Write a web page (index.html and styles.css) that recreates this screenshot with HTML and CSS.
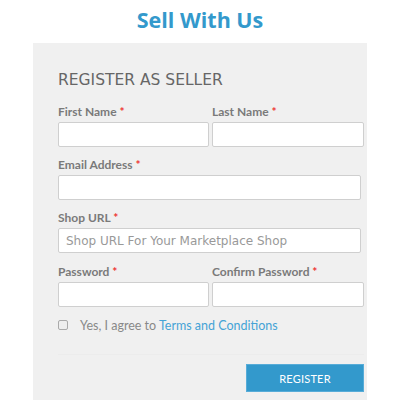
FILE: index.html
```html
<!DOCTYPE html>
<html>
<head>
<meta charset="utf-8">
<link rel="stylesheet" href="styles.css">
</head>
<body>
<h1 class="title">Sell With Us</h1>
<div class="panel">
  <h2 class="heading">REGISTER AS SELLER</h2>
  <div class="row two">
    <div class="field">
      <label class="lbl">First Name <span class="req">*</span></label>
      <input class="inp" type="text">
    </div>
    <div class="field">
      <label class="lbl">Last Name <span class="req">*</span></label>
      <input class="inp" type="text">
    </div>
  </div>
  <div class="row">
    <div class="field">
      <label class="lbl">Email Address <span class="req">*</span></label>
      <input class="inp full" type="text">
    </div>
  </div>
  <div class="row">
    <div class="field">
      <label class="lbl">Shop URL <span class="req">*</span></label>
      <input class="inp full" type="text" placeholder="Shop URL For Your Marketplace Shop">
    </div>
  </div>
  <div class="row two last">
    <div class="field">
      <label class="lbl">Password <span class="req">*</span></label>
      <input class="inp" type="password">
    </div>
    <div class="field">
      <label class="lbl">Confirm Password <span class="req">*</span></label>
      <input class="inp" type="password">
    </div>
  </div>
  <div class="agree">
    <span class="cb"></span>
    <span class="agree-text">Yes, I agree to <a class="link" href="#">Terms and Conditions</a></span>
  </div>
  <div class="actions">
    <button class="btn" type="button">REGISTER</button>
  </div>
</div>
</body>
</html>
```

FILE: styles.css
```css
html, body {
  margin: 0;
  padding: 0;
  background: #fff;
}
.title {
  margin: 0;
  padding-top: 6px;
  height: 36px;
  box-sizing: border-box;
  text-align: center;
  font-family: "Open Sans", sans-serif;
  font-weight: 700;
  font-size: 21.5px;
  line-height: 27px;
  color: #3399cc;
}
.panel {
  margin-top: 7px;
  margin-left: 33px;
  width: 334px;
  height: 357px;
  box-sizing: border-box;
  background: #f0f0f0;
  padding: 27px 3px 0 25px;
}
.heading {
  margin: 0;
  font-family: "DejaVu Sans", sans-serif;
  font-weight: 400;
  font-size: 15.5px;
  line-height: 20px;
  color: #666;
}
.row {
  margin-top: 14px;
}
.row + .row {
  margin-top: 10px;
}
.row.last {
  margin-top: 11px;
}
.row.two {
  display: grid;
  grid-template-columns: 151px 152px;
  column-gap: 3px;
}
.field {
  display: flex;
  flex-direction: column;
}
.lbl {
  font-family: "Lato", sans-serif;
  font-weight: 700;
  font-size: 12px;
  line-height: 15px;
  color: #7a7a7a;
  margin-bottom: 3px;
}
.req {
  color: #e33;
}
.inp {
  display: block;
  margin: 0;
  height: 25px;
  box-sizing: border-box;
  border: 1px solid #cfcfcf;
  border-radius: 2px;
  background: #fff;
  padding: 0 7px;
  font-family: "DejaVu Sans", sans-serif;
  font-size: 12px;
  color: #555;
  outline: none;
}
.inp.full {
  width: 303px;
}
.inp::placeholder {
  color: #999;
}
.agree {
  display: flex;
  align-items: center;
  margin-top: 11px;
  height: 14px;
}
.cb {
  width: 10px;
  height: 10px;
  box-sizing: border-box;
  border: 1px solid #aaa;
  border-radius: 2px;
  background: #eee;
}
.agree-text {
  margin-left: 12px;
  font-family: "Lato", sans-serif;
  font-size: 12.5px;
  color: #888;
}
.link {
  color: #45a3d6;
  text-decoration: none;
}
.actions {
  margin-top: 22px;
  border-top: 1px solid #ececec;
  padding-top: 9px;
  display: flex;
  justify-content: flex-end;
}
.btn {
  width: 118px;
  height: 28px;
  margin: 0;
  border: 1px solid #57acd8;
  background: #3399cc;
  color: #fff;
  font-family: "Lato", sans-serif;
  font-size: 11px;
  letter-spacing: 0.2px;
  cursor: pointer;
}
```
